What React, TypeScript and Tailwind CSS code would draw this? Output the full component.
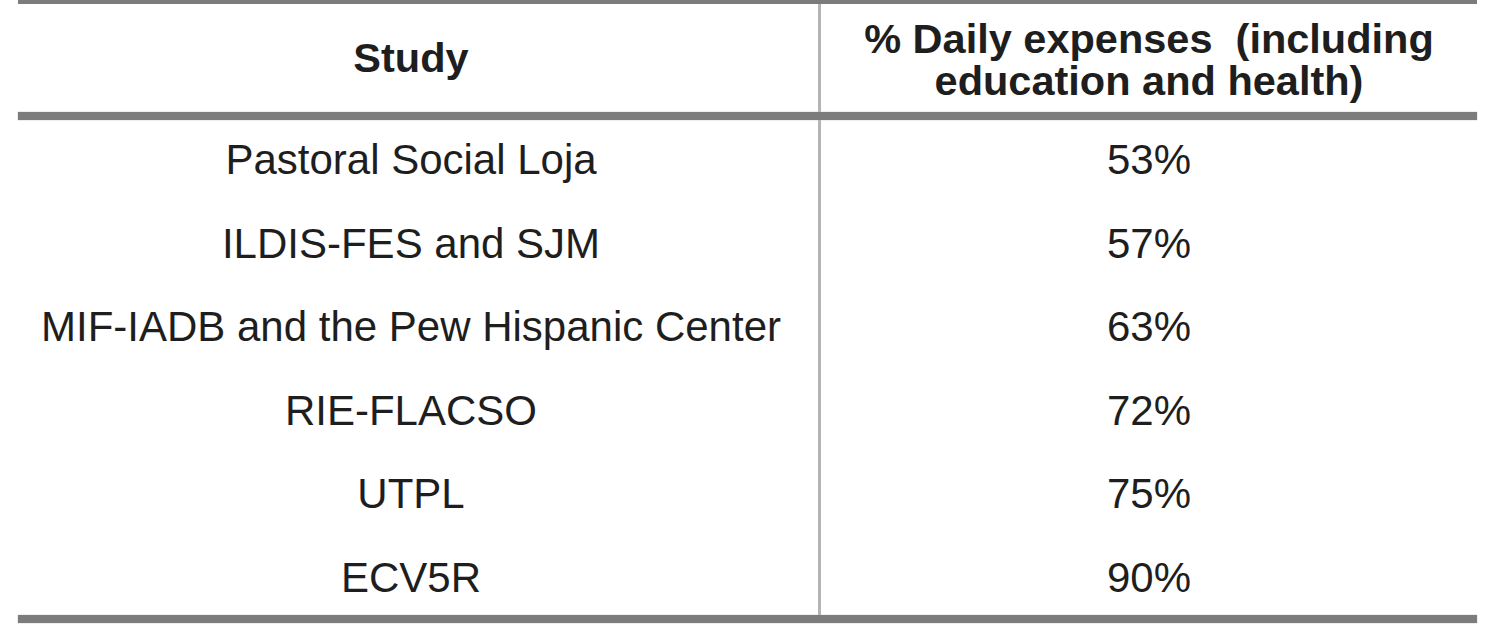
const rows = [
  { study: "Pastoral Social Loja", pct: "53%" },
  { study: "ILDIS-FES and SJM", pct: "57%" },
  { study: "MIF-IADB and the Pew Hispanic Center", pct: "63%" },
  { study: "RIE-FLACSO", pct: "72%" },
  { study: "UTPL", pct: "75%" },
  { study: "ECV5R", pct: "90%" },
];

export default function App() {
  return (
    <div className="w-[1490px] h-[639px] bg-white font-['Liberation_Sans',Arial,sans-serif] text-[#1e1e1e]">
      <div className="ml-[18px] w-[1459px]">
        <div className="h-[4px] bg-[#7c7c7c]" />
        <div className="grid grid-cols-[800px_1fr] h-[108px]">
          <div className="flex items-center justify-center pr-[14px] text-[41.5px] font-bold leading-[42px]">
            Study
          </div>
          <div className="flex items-center justify-center border-l-[3px] border-[#b4b4b4] pt-[4px] text-center text-[41.5px] font-bold leading-[42px] whitespace-pre-line">
            {"% Daily expenses\u00a0 (including\neducation and health)"}
          </div>
        </div>
        <div className="h-[8px] bg-[#7c7c7c] shadow-[0_0_1px_#9a9a9a]" />
        <div className="grid grid-rows-[repeat(5,83.5px)_77.5px]">
          {rows.map((r) => (
            <div key={r.study} className="grid grid-cols-[800px_1fr] text-[42px] leading-[42px]">
              <div className="flex justify-center pr-[14px] pt-[19px]">{r.study}</div>
              <div className="flex justify-center border-l-[3px] border-[#b4b4b4] pt-[19px]">
                {r.pct}
              </div>
            </div>
          ))}
        </div>
        <div className="h-[8px] bg-[#7c7c7c] shadow-[0_0_1px_#9a9a9a]" />
      </div>
    </div>
  );
}
